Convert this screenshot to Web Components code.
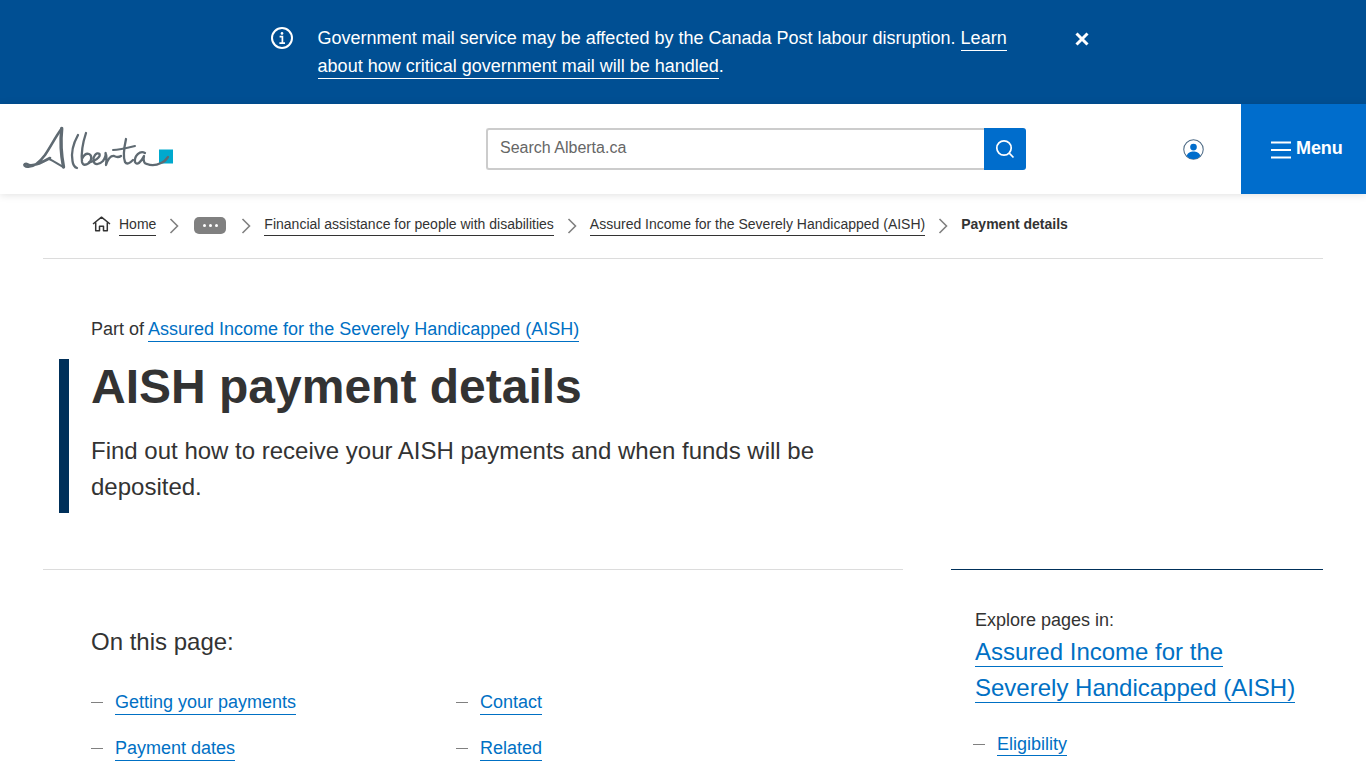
<!DOCTYPE html>
<html lang="en">
<head>
<meta charset="utf-8">
<title>AISH payment details | Alberta.ca</title>
<style>
  html, body { margin: 0; padding: 0; height: 768px; overflow: hidden; background: #fff; }
  body { font-family: "Liberation Sans", Arial, sans-serif; color: #333; }
</style>
</head>
<body>
<ab-notice>
  Government mail service may be affected by the Canada Post labour disruption. <a href="#">Learn about how critical government mail will be handled</a>.
</ab-notice>
<ab-header></ab-header>
<ab-breadcrumb></ab-breadcrumb>
<ab-hero part-of="Assured Income for the Severely Handicapped (AISH)" heading="AISH payment details">
  Find out how to receive your AISH payments and when funds will be deposited.
</ab-hero>
<ab-content>
  <ab-toc></ab-toc>
  <ab-sidenav slot="side"></ab-sidenav>
</ab-content>

<script>
class AbNotice extends HTMLElement {
  constructor() {
    super();
    this.attachShadow({ mode: 'open' });
    this.shadowRoot.innerHTML = `
      <style>
        :host { display: block; background: #004f93; color: #fff; font-size: 18px; line-height: 28px; }
        .inner { display: flex; height: 104px; box-sizing: border-box; padding: 24px 0 0 271px; }
        .icon { width: 22px; height: 22px; margin: 3px 24.6px 0 0; flex: none; }
        .text { width: 700.4px; flex: none; }
        ::slotted(a) { color: #fff; text-decoration: none; border-bottom: 1px solid #fff; padding-bottom: 2px; }
        .close { width: 14px; height: 14px; margin: 8px 0 0 57px; flex: none; }
      </style>
      <div class="inner">
        <svg class="icon" viewBox="0 0 22 22" fill="none" stroke="#fff">
          <circle cx="11" cy="11" r="10" stroke-width="2"/>
          <circle cx="11" cy="6.4" r="1.3" fill="#fff" stroke="none"/>
          <path d="M8.6 9.6H11.4V16M8.4 16.2H14" stroke-width="1.7"/>
        </svg>
        <div class="text"><slot></slot></div>
        <svg class="close" viewBox="0 0 14 14" fill="none" stroke="#fff" stroke-width="3">
          <path d="M1.5 1.5L12.5 12.5M12.5 1.5L1.5 12.5"/>
        </svg>
      </div>
    `;
  }
}

class AbHeader extends HTMLElement {
  constructor() {
    super();
    this.attachShadow({ mode: 'open' });
    this.shadowRoot.innerHTML = `
      <style>
        :host { display: block; position: relative; background: #fff; box-shadow: 0 1px 8px rgba(0,0,0,.12); }
        .bar { display: flex; align-items: stretch; height: 90px; }
        .logo { width: 152px; height: 46px; margin: 22px 0 0 23px; flex: none; }
        form { display: flex; margin: 24px 0 0 311px; height: 42px; flex: none; }
        input { box-sizing: border-box; width: 498px; height: 42px; border: 2px solid #ccc; border-right: 0; border-radius: 3px 0 0 3px;
                padding: 0 12px 2px; font: 16px "Liberation Sans", Arial, sans-serif; color: #333; outline: 0; background: #fff; }
        input::placeholder { color: #666; opacity: 1; }
        .go { width: 42px; height: 42px; background: #006dcc; border-radius: 0 3px 3px 0; display: flex; align-items: center; justify-content: center; }
        .user { width: 21px; height: 21px; margin: 35px 0 0 157px; flex: none; }
        .menu { margin-left: auto; width: 125px; background: #006dcc; color: #fff; display: flex; align-items: center; box-sizing: border-box; padding: 0 0 2px 30px;
                font-size: 18px; font-weight: 700; letter-spacing: -.1px; }
        .menu svg { margin-right: 5px; position: relative; top: 2px; }
      </style>
      <div class="bar">
        <svg class="logo" viewBox="0 0 152 46" role="img" aria-label="Alberta" fill="none" stroke="#5f6a72" stroke-width="2.300" stroke-linecap="round" stroke-linejoin="round">
          <rect x="136" y="23.500" width="14" height="14" fill="#00a9ce" stroke="none"/>
          <path d="M38.700 2.500C33 10 28 20 22 29C16 37 9 42 3 40.500C0.500 39.500 1 37.500 4 38C8 42 18 37 27 32" stroke-width="2.600"/>
          <path d="M38.700 2.500C37.500 14 38 28 40.500 41" stroke-width="3.400"/>
          <path d="M26 33C31 35 36 39 40.500 41" stroke-width="2"/>
          <path d="M55 9C50 18 48 27 49.500 35C50 39 51 41 54 42"/>
          <path d="M63 7C60 16 58 27 59 36C60 40 63 39 66 37C69 34 69 29 66 28C63 27 61 29 59.500 32"/>
          <path d="M66 36.500C71 36 78 31 76.500 28C73.500 25.500 69.500 31 70.500 35C71.500 39.500 76 39 80 35C82 32 83 29 82.500 27C84 30 83.500 35 83 39C85 33 87 29.500 91 30C93 31 95 32 98 30"/>
          <path d="M103 13C101 22 100 31 102 36C104 39 107 37 110 34"/>
          <path d="M90 24C96 24 104 22 112 20" stroke-width="2"/>
          <path d="M122 27C117 24 111 30 112 36C114 40 118 36 121 30C120 34 121 38 124 38C129 40 134 39 138 37C141 36 143 34 145 31"/>
        </svg>
        <form>
          <input type="text" placeholder="Search Alberta.ca">
          <div class="go">
            <svg width="20" height="20" viewBox="0 0 20 20" fill="none" stroke="#fff" stroke-width="1.700">
              <circle cx="9" cy="9" r="7.200"/><path d="M14.200 14.200L18.500 18.500"/>
            </svg>
          </div>
        </form>
        <svg class="user" viewBox="0 0 22 22">
          <circle cx="11" cy="11" r="10.200" fill="#fff" stroke="#4d6a85" stroke-width="1.100"/>
          <circle cx="11" cy="8.500" r="3.500" fill="#006dcc"/>
          <path d="M3.800 17.500C5 14 8 13 11 13C14 13 17 14 18.200 17.500C16.500 20 13.500 21 11 21C8.500 21 5.500 20 3.800 17.500Z" fill="#006dcc"/>
        </svg>
        <div class="menu">
          <svg width="20" height="18" viewBox="0 0 20 18" stroke="#fff" stroke-width="2"><path d="M0 1.500H20M0 9H20M0 16.500H20"/></svg>
          <span>Menu</span>
        </div>
      </div>
    `;
  }
}

class AbBreadcrumb extends HTMLElement {
  constructor() {
    super();
    this.attachShadow({ mode: 'open' });
    const sep = `<svg class="sep" width="10" height="16" viewBox="0 0 10 16" fill="none" stroke="#808080" stroke-width="1.600"><path d="M1.500 1L8.500 8L1.500 15"/></svg>`;
    this.shadowRoot.innerHTML = `
      <style>
        :host { display: block; margin: 0 43px; height: 64px; border-bottom: 1px solid #dcdcdc; font-size: 14px; line-height: 18px; color: #333; }
        nav { display: flex; align-items: center; height: 60px; padding-left: 49px; }
        a { color: #333; text-decoration: none; border-bottom: 1px solid #333; padding-bottom: 2px; margin-top: 2px; }
        .home { margin-right: 8px; flex: none; }
        .sep { margin: 3px 13px 0; flex: none; }
        .more { width: 32px; height: 17px; border-radius: 5px; background: #808080; display: flex; align-items: center; justify-content: center; gap: 3px; margin: 2px 2px 0; }
        .more i { width: 3px; height: 3px; border-radius: 50%; background: #fff; }
        b { font-weight: 700; font-size: 14px; }
      </style>
      <nav>
        <svg class="home" width="19" height="16" viewBox="0 0 19 16" fill="none" stroke="#333" stroke-width="1.500" stroke-linejoin="round">
          <path d="M1 8L9.500 1.200L18 8M3.700 6.500V14.800H7.500V10.200H11.500V14.800H15.300V6.500"/>
        </svg>
        <a href="#">Home</a>${sep}
        <span class="more"><i></i><i></i><i></i></span>${sep}
        <a href="#">Financial assistance for people with disabilities</a>${sep}
        <a href="#">Assured Income for the Severely Handicapped (AISH)</a>${sep}
        <b>Payment details</b>
      </nav>
    `;
  }
}

class AbHero extends HTMLElement {
  constructor() {
    super();
    this.attachShadow({ mode: 'open' });
    this.shadowRoot.innerHTML = `
      <style>
        :host { display: block; padding: 56px 0 56px 59px; color: #333; }
        .part { font-size: 18px; line-height: 28px; margin-left: 32px; height: 44px; }
        a { color: #0070c4; text-decoration: none; border-bottom: 1px solid #0070c4; padding-bottom: 2px; }
        .block { border-left: 10px solid #00305a; padding-left: 22px; height: 154px; box-sizing: border-box; }
        h1 { margin: 0; font-size: 48px; line-height: 56px; font-weight: 700; color: #333; }
        p { margin: 18px 0 0; width: 740px; font-size: 24px; line-height: 36px; }
      </style>
      <div class="part">Part of <a href="#">${this.getAttribute('part-of')}</a></div>
      <div class="block">
        <h1>${this.getAttribute('heading')}</h1>
        <p><slot></slot></p>
      </div>
    `;
  }
}

class AbContent extends HTMLElement {
  constructor() {
    super();
    this.attachShadow({ mode: 'open' });
    this.shadowRoot.innerHTML = `
      <style>
        :host { display: grid; grid-template-columns: 860px 372px; column-gap: 48px; margin: 0 43px; }
        .main { border-top: 1px solid #dcdcdc; }
        .side { border-top: 1px solid #00305a; }
      </style>
      <div class="main"><slot></slot></div>
      <div class="side"><slot name="side"></slot></div>
    `;
  }
}

class AbToc extends HTMLElement {
  constructor() {
    super();
    this.attachShadow({ mode: 'open' });
    this.shadowRoot.innerHTML = `
      <style>
        :host { display: block; padding: 54px 0 0 48px; font-size: 18px; line-height: 28px; color: #333; }
        h2 { margin: 0 0 28px; font-size: 24px; line-height: 36px; font-weight: 400; }
        ul { list-style: none; margin: 0; padding: 0; display: grid; grid-template-columns: 365px 1fr; row-gap: 18px; }
        li { display: flex; }
        li::before { content: ""; width: 12px; height: 1px; background: #808080; margin: 14px 12px 0 0; flex: none; }
        a { color: #0070c4; text-decoration: none; border-bottom: 1px solid #0070c4; padding-bottom: 2px; }
      </style>
      <h2>On this page:</h2>
      <ul>
        <li><span><a href="#">Getting your payments</a></span></li>
        <li><span><a href="#">Contact</a></span></li>
        <li><span><a href="#">Payment dates</a></span></li>
        <li><span><a href="#">Related</a></span></li>
      </ul>
    `;
  }
}

class AbSidenav extends HTMLElement {
  constructor() {
    super();
    this.attachShadow({ mode: 'open' });
    this.shadowRoot.innerHTML = `
      <style>
        :host { display: block; padding: 36px 24px 0; font-size: 18px; line-height: 28px; color: #333; }
        .big { font-size: 24px; line-height: 36px; margin: 0 0 24px; }
        a { color: #0070c4; text-decoration: none; border-bottom: 1px solid #0070c4; padding-bottom: 1px; }
        ul { list-style: none; margin: 0; padding: 0; }
        li { display: flex; }
        li::before { content: ""; width: 12px; height: 1px; background: #808080; margin: 14px 12px 0 -2px; flex: none; }
      </style>
      <div>Explore pages in:</div>
      <div class="big"><a href="#">Assured Income for the Severely Handicapped (AISH)</a></div>
      <ul><li><span><a href="#">Eligibility</a></span></li></ul>
    `;
  }
}

customElements.define('ab-notice', AbNotice);
customElements.define('ab-header', AbHeader);
customElements.define('ab-breadcrumb', AbBreadcrumb);
customElements.define('ab-hero', AbHero);
customElements.define('ab-content', AbContent);
customElements.define('ab-toc', AbToc);
customElements.define('ab-sidenav', AbSidenav);
</script>
</body>
</html>
